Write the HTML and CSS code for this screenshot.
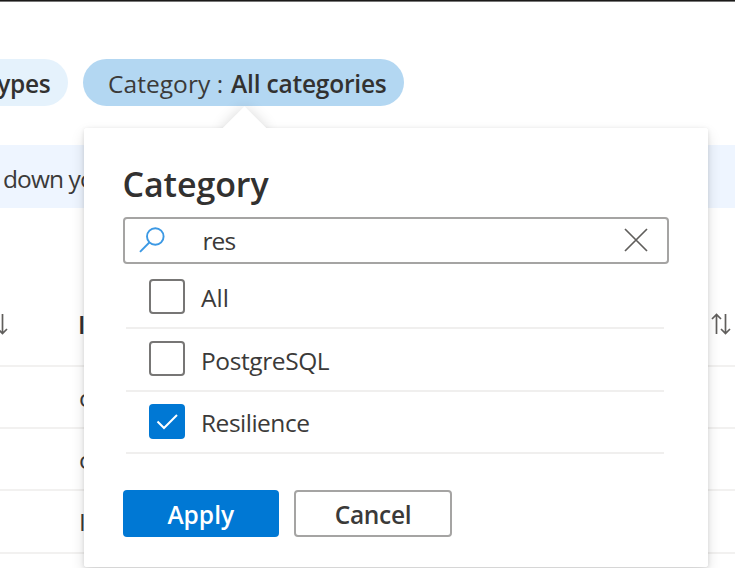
FILE: index.html
```html
<!DOCTYPE html>
<html lang="en">
<head>
<meta charset="utf-8">
<title>Category filter</title>
<link rel="stylesheet" href="styles.css">
</head>
<body>
<main class="page">
  <div class="topbar"></div>
  <div class="filters">
    <div class="pill pill-types"><b>ypes</b></div>
    <div class="pill pill-category"><span class="pill-label">Category :</span><b class="pill-value">All categories</b></div>
  </div>
  <div class="banner"><span>down your</span></div>
  <div class="table">
    <div class="row head">
      <svg class="sort" viewBox="0 0 20 22"><path d="M5.500 21V2M1 6l4.500-4.500L10 6M14.500 1v19M10 16l4.500 4.500L19 16"/></svg>
      <b class="cell">I</b>
      <svg class="sort sort-end" viewBox="0 0 20 22"><path d="M5.500 21V2M1 6l4.500-4.500L10 6M14.500 1v19M10 16l4.500 4.500L19 16"/></svg>
    </div>
    <div class="row"><span class="cell">o</span></div>
    <div class="row"><span class="cell">o</span></div>
    <div class="row"><span class="cell">I</span></div>
    <div class="row"></div>
  </div>
  <section class="callout">
    <div class="beak"></div>
    <div class="panel">
      <h2>Category</h2>
      <div class="search">
        <svg class="glass" viewBox="0 0 26 26"><circle cx="16.300" cy="9.500" r="8.300"/><path d="M10.300 15.500L1 24.800"/></svg>
        <span class="query">res</span>
        <svg class="clear" viewBox="0 0 24 24"><path d="M1 1l22 22M23 1L1 23"/></svg>
      </div>
      <div class="options">
        <label class="option"><i class="box"></i><span class="t-all">All</span></label>
        <label class="option"><i class="box"></i><span class="t-pg">PostgreSQL</span></label>
        <label class="option"><i class="box checked"><svg viewBox="0 0 36 35"><path d="M8.500 17.500l6.500 6.500L28 11"/></svg></i><span class="t-res">Resilience</span></label>
      </div>
      <div class="actions">
        <div class="btn primary"><span>Apply</span></div>
        <div class="btn secondary"><span>Cancel</span></div>
      </div>
    </div>
  </section>
</main>
</body>
</html>
```
FILE: styles.css
```css
* { box-sizing: border-box; }
body { margin: 0; background: #fff; color: #3b3a39; font: 24.500px/34px "Open Sans", "Noto Sans", sans-serif; }
b { font-weight: 600; color: #323130; }
svg { display: block; fill: none; }
.page { position: relative; width: 735px; height: 568px; overflow: hidden; white-space: nowrap; }
.topbar { height: 2px; background: linear-gradient(#1b1a19 50%, #777 50%); }
.filters { display: flex; gap: 15px; padding-top: 57px; }
.pill { height: 47px; border-radius: 24px; display: flex; align-items: center; padding-top: 2px; }
.pill-types { width: 68px; background: #e5f2fc; border-radius: 0 24px 24px 0; justify-content: flex-end; padding-right: 17.500px; letter-spacing: -.3px; }
.pill-category { width: 320.500px; background: #b3d7f2; padding-left: 25px; }
.pill-label { width: 123px; letter-spacing: .05px; }
.pill-value { letter-spacing: -.2px; }
.banner { margin-top: 39px; height: 62.500px; background: #eef5ff; padding: 17px 0 0 3px; line-height: 34px; letter-spacing: -.9px; }
.row { height: 62.400px; border-bottom: 2px solid #f2f1f0; padding: 14px 0 0 79px; }
.head { display: flex; height: 159px; padding: 100px 0 0; }
.sort { width: 20px; height: 22px; margin: 5px 0 0 -12px; stroke: #605e5c; stroke-width: 1.700; flex: none; }
.head .cell { width: 641px; margin-left: 70px; flex: none; }
.sort-end { margin-left: -8.500px; }
.callout { position: absolute; left: 83.500px; top: 128px; width: 624.500px; height: 438.500px; }
.beak { position: absolute; left: 144px; top: -15px; width: 33px; height: 33px; background: #fff; transform: rotate(45deg); box-shadow: 0 0 14px rgba(0,0,0,.15); }
.callout::before { content: ""; position: absolute; inset: 0; box-shadow: 0 6px 14px rgba(0,0,0,.13), 0 1px 4px rgba(0,0,0,.11); border-radius: 3px; }
.panel { position: relative; height: 100%; background: #fff; border-radius: 3px; padding: 33px 39px 0; }
h2 { margin: 0; font-size: 34px; line-height: 46px; font-weight: 600; letter-spacing: -.1px; color: #323130; }
.search { margin-top: 10px; height: 47px; display: flex; align-items: center; border: 2px solid #a5a4a3; border-radius: 4px; padding: 0 19px 0 14px; }
.glass { width: 26px; height: 26px; stroke: #3c99e4; stroke-width: 1.900; margin-top: -2px; }
.query { margin-left: 38px; letter-spacing: -.9px; }
.clear { width: 24px; height: 24px; margin: -2px 0 0 auto; stroke: #605e5c; stroke-width: 1.700; }
.options { margin: 3px 5px 0 3px; }
.option { height: 62.400px; display: flex; align-items: center; gap: 16px; padding: 0 0 1.500px 23.500px; border-bottom: 2px solid #f0efee; }
.option span { padding-top: 4px; }
.t-pg { letter-spacing: -.4px; }
.t-res { letter-spacing: -.5px; }
.box { width: 36px; height: 35px; border: 2px solid #777675; border-radius: 4px; }
.checked { background: #0078d4; border: 0; }
.checked svg { stroke: #fff; stroke-width: 2; }
.actions { display: flex; gap: 15px; margin-top: 35.500px; }
.btn { width: 156.500px; height: 47px; border-radius: 4px; display: flex; align-items: center; justify-content: center; font-weight: 600; padding-top: 4px; }
.primary { background: #0078d4; color: #fff; }
.secondary { width: 158px; border: 2px solid #a5a4a3; letter-spacing: -.3px; }
```
